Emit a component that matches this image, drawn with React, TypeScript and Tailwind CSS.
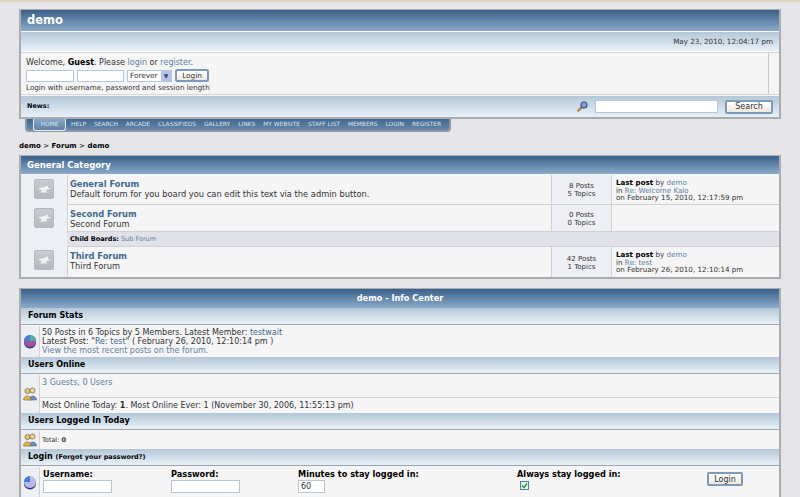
import React from "react";

const font = "font-['DejaVu_Sans',sans-serif]";
const blueBar = "bg-gradient-to-b from-[#3a618a] to-[#8cabc9]";
const paleBar = "bg-gradient-to-b from-[#b4c7d8] to-[#e9f1f7]";
const link = "text-[#5d7fa3]";

const BoardIcon = () => (
  <div className="w-[20px] h-[20px] rounded-[2px] border border-[#b4b8bd] bg-gradient-to-b from-[#c8cdd2] to-[#b2b8be] flex items-center justify-center">
    <svg width="14" height="10" viewBox="0 0 14 10">
      <path d="M1 4 L6 3.5 L11 1.5 L11 4 L13 4 L13 5 L9 6 L10 8.5 L3 8.5 L5 6 Q2 5.5 1 4 Z" fill="#f0f2f3" />
    </svg>
  </div>
);

const PieIcon = ({ full = true }: { full?: boolean }) => (
  <svg width="14" height="15" viewBox="0 0 14 15">
    <ellipse cx="7" cy="8.5" rx="6" ry="6" fill="#34347f" />
    <ellipse cx="7" cy="7" rx="6" ry="6" fill={full ? "#a0569f" : "#b9b9ea"} />
    <path d="M7 7 L7 1 A6 6 0 0 0 1 7 Z" fill="#3f7fd8" />
    {full && <path d="M7 7 L7 1 A6 6 0 0 1 13 7 Z" fill="#4db0a0" />}
  </svg>
);

const UsersIcon = () => (
  <svg width="14" height="14" viewBox="0 0 14 14">
    <circle cx="4.5" cy="4" r="2.6" fill="#e8c66a" stroke="#6a6a50" strokeWidth="0.7" />
    <circle cx="9.5" cy="3.5" r="2.6" fill="#e8d48a" stroke="#6a6a50" strokeWidth="0.7" />
    <path d="M6 13 C6 8 13.5 7.5 13.5 13 Z" fill="#6a8fb8" stroke="#54657c" strokeWidth="0.6" />
    <path d="M0.5 13 C0.5 7.5 8 7.5 8 13 Z" fill="#e2b83e" stroke="#6f6a48" strokeWidth="0.6" />
  </svg>
);

const MagnifierIcon = () => (
  <svg width="11" height="11" viewBox="0 0 11 11">
    <line x1="1.2" y1="9.8" x2="5" y2="6" stroke="#b8772a" strokeWidth="2" strokeLinecap="round" />
    <circle cx="7" cy="4" r="3" fill="#7f9fd8" stroke="#3c4c78" strokeWidth="1.1" />
  </svg>
);

const Button = ({ label, className }: { label: string; className: string }) => (
  <button className={`rounded-[2px] border-2 border-[#7d9ab8] bg-gradient-to-b from-white to-[#eee9de] text-[#333] text-center ${className}`}>
    {label}
  </button>
);

const Field = ({ className, value }: { className: string; value?: string }) => (
  <div className={`bg-white border border-[#b6c7d8] text-[#333] px-[2px] ${className}`}>{value}</div>
);

const navItems = ["HELP", "SEARCH", "ARCADE", "CLASSIFIEDS", "GALLERY", "LINKS", "MY WEBSITE", "STAFF LIST", "MEMBERS", "LOGIN", "REGISTER"];

const Header = () => (
  <div className="mx-[19px] mt-[7px] border-2 border-t border-[#a9adb1] bg-[#f5f5f5] w-[762px]">
    <div className={`${blueBar} h-[21px] pl-[6px] text-[11.5px] leading-[21px] font-bold text-white`}>demo</div>
    <div className={`${paleBar} mt-px h-[19px] pr-[6px] text-right text-[7.2px] leading-[19px] text-[#333]`}>
      May 23, 2010, 12:04:17 pm
    </div>
    <div className="flex h-[43px] mt-px border-y border-[#d5d7da]">
      <div className="flex-1 pl-[5px] pt-[3px] text-[#333]">
        <div className="text-[8px] leading-[13px]">
          Welcome, <b className="text-black">Guest</b>. Please <span className={link}>login</span> or <span className={link}>register</span>.
        </div>
        <div className="flex gap-[3px] h-[13px] text-[7.3px] leading-[10px]">
          <Field className="w-[48px] h-[12px] mt-px" />
          <Field className="w-[47px] h-[12px] mt-px" />
          <div className="w-[45px] h-[12px] mt-px flex bg-white border border-[#b6c7d8] pl-[2px] justify-between">
            Forever
            <span className="w-[10px] bg-[#b6c4ea] text-[#33457f] text-[6px] text-center">▼</span>
          </div>
          <Button label="Login" className="w-[34px] leading-[9px]" />
        </div>
        <div className="text-[7.2px] leading-[11px]">Login with username, password and session length</div>
      </div>
      <div className="w-[11px] border-l border-[#c6c8cb]" />
    </div>
    <div className={`${paleBar} mt-px h-[21px] flex items-center`}>
      <b className="pl-[6px] text-[6.5px] text-black">News:</b>
      <div className="flex-1" />
      <MagnifierIcon />
      <Field className="w-[123px] h-[13px] ml-[7px]" />
      <Button label="Search" className="w-[48px] h-[14px] ml-[7px] mr-[6px] text-[8px] leading-[10px]" />
    </div>
  </div>
);

const Nav = () => (
  <div className="ml-[25px] w-[426px] h-[13px] flex bg-gradient-to-b from-[#41688f] to-[#6487aa] rounded-b-[4px] border-2 border-t-0 border-[#8e98a3] text-[5.9px] leading-[11px] text-[#d9e4ee] pl-[6px] whitespace-nowrap">
    <div className="w-[33px] h-[12px] text-center bg-gradient-to-b from-[#8aa8c6] to-[#5d81a6] rounded-b-[3px] border border-t-0 border-[#e8eaec] text-[#d8e3ee]">HOME</div>
    <div className="flex gap-[8px] pl-[5px]">
      {navItems.map((item) => (
        <span key={item}>{item}</span>
      ))}
    </div>
  </div>
);

const Stats = ({ posts, topics }: { posts: string; topics: string }) => (
  <div className="w-[61px] bg-[#edeff4] border-x border-[#cfd1d4] text-center text-[7px] leading-[8px] pt-px text-[#333] flex flex-col justify-center">
    <div>{posts} Posts</div>
    <div>{topics} Topics</div>
  </div>
);

const LastPost = ({ topic, date }: { topic?: string; date?: string }) => (
  <div className="w-[167px] pl-[4px] pt-[4px] text-[7.15px] leading-[7.6px] text-[#333] whitespace-nowrap">
    {topic && (
      <>
        <div><b className="text-black">Last post</b> by <span className={link}>demo</span></div>
        <div>in <span className={link}>{topic}</span></div>
        <div>on {date}</div>
      </>
    )}
  </div>
);

const ForumRow = ({ title, text, className, children }: { title: string; text: string; className: string; children: React.ReactNode }) => (
  <div className={`flex border-b border-[#cfd1d4] ${className}`}>
    <div className="flex-1 pl-[2px] pt-[4px] border-l border-[#cfd1d4]">
      <div className="text-[8.3px] leading-[10px] font-bold text-[#41688f]">{title}</div>
      <div className="text-[8.3px] leading-[11px] text-[#333]">{text}</div>
    </div>
    {children}
  </div>
);

const Category = () => (
  <div className="ml-[19px] mt-[3px] w-[762px] border-2 border-t border-[#a9adb1] bg-[#f5f5f5]">
    <div className={`${blueBar} h-[18px] pl-[6px] text-[8.5px] leading-[18px] font-bold text-white`}>General Category</div>
    <div className="flex border-t border-[#f5f5f5]">
      <div className="w-[46px] bg-[#edeff4] flex flex-col items-center">
        <div className="h-[30px] pt-[4px]"><BoardIcon /></div>
        <div className="h-[42px] pt-[3px]"><BoardIcon /></div>
        <div className="pt-[3px]"><BoardIcon /></div>
      </div>
      <div className="flex-1">
        <ForumRow title="General Forum" text="Default forum for you board you can edit this text via the admin button." className="h-[30px]">
          <Stats posts="8" topics="5" />
          <LastPost topic="Re: Welcome Kalo" date="February 15, 2010, 12:17:59 pm" />
        </ForumRow>
        <ForumRow title="Second Forum" text="Second Forum" className="h-[27px]">
          <Stats posts="0" topics="0" />
          <LastPost />
        </ForumRow>
        <div className="h-[15px] pl-[3px] bg-[#e0e1e9] border-b border-[#cfd1d4] text-[6.5px] leading-[15px] text-[#666]">
          <b className="text-black">Child Boards:</b> <span className={link}>Sub Forum</span>
        </div>
        <ForumRow title="Third Forum" text="Third Forum" className="h-[30px] border-b-0">
          <Stats posts="42" topics="1" />
          <LastPost topic="Re: test" date="February 26, 2010, 12:10:14 pm" />
        </ForumRow>
      </div>
    </div>
  </div>
);

const SectionTitle = ({ children }: { children: React.ReactNode }) => (
  <div className={`${paleBar} h-[17px] pl-[7px] border-b border-[#9aa5b0] text-[8px] leading-[16px] font-bold text-black`}>{children}</div>
);

const InfoRow = ({ icon, className, children }: { icon: React.ReactNode; className: string; children: React.ReactNode }) => (
  <div className={`flex border-t border-[#f5f5f5] ${className}`}>
    <div className="w-[19px] bg-[#edeff4] border-r border-[#cfd1d4] flex items-center justify-center">{icon}</div>
    <div className="flex-1 text-[#333]">{children}</div>
  </div>
);

const InfoCenter = () => (
  <div className="ml-[19px] mt-[9px] w-[762px] border-2 border-t border-[#a9adb1] bg-[#f5f5f5]">
    <div className={`${blueBar} h-[19px] text-center text-[8.2px] leading-[19px] font-bold text-white`}>demo - Info Center</div>
    <SectionTitle>Forum Stats</SectionTitle>
    <InfoRow icon={<PieIcon />} className="h-[32px]">
      <div className="pl-[2px] pt-[3px] text-[8px] leading-[8.8px]">
        <div>50 Posts in 6 Topics by 5 Members. Latest Member: <span className="text-[#41688f]">testwait</span></div>
        <div>Latest Post: "<b className="font-normal text-[#41688f]">Re: test</b>" ( February 26, 2010, 12:10:14 pm )</div>
        <div className={link}>View the most recent posts on the forum.</div>
      </div>
    </InfoRow>
    <SectionTitle>Users Online</SectionTitle>
    <InfoRow icon={<UsersIcon />} className="h-[39px]">
      <div className={`h-[23px] border-b border-[#cfd1d4] pl-[2px] pt-[3px] text-[8px] leading-[10px] ${link}`}>3 Guests, 0 Users</div>
      <div className="pl-[2px] text-[8px] leading-[15px]">Most Online Today: <b>1</b>. Most Online Ever: 1 (November 30, 2006, 11:55:13 pm)</div>
    </InfoRow>
    <SectionTitle>Users Logged In Today</SectionTitle>
    <InfoRow icon={<UsersIcon />} className="h-[19px]">
      <div className="pl-[2px] text-[6.5px] leading-[18px]">Total: <b>0</b></div>
    </InfoRow>
    <SectionTitle>
      Login <span className="text-[6.5px]">(Forgot your password?)</span>
    </SectionTitle>
    <InfoRow icon={<PieIcon full={false} />} className="h-[31px]">
      <div className="flex pl-[3px] pt-[2px] text-[8.2px] leading-[10px] font-bold text-black">
        <div className="w-[128px]">
          Username:
          <Field className="w-[69px] h-[13px] mt-[1px]" />
        </div>
        <div className="w-[127px]">
          Password:
          <Field className="w-[69px] h-[13px] mt-[1px]" />
        </div>
        <div className="w-[219px]">
          Minutes to stay logged in:
          <Field className="w-[27px] h-[13px] mt-[1px] font-normal text-[8px] leading-[11px]" value="60" />
        </div>
        <div className="w-[190px]">
          Always stay logged in:
          <div className="ml-[3px] mt-[2px] w-[9px] h-[9px] border border-[#5a7fa0] bg-[#e3eef2] flex items-center justify-center">
            <svg width="7" height="7" viewBox="0 0 7 7">
              <path d="M1 3.5 L3 5.5 L6 1.5" fill="none" stroke="#1f9a2a" strokeWidth="1.4" />
            </svg>
          </div>
        </div>
        <Button label="Login" className="w-[36px] h-[14px] mt-[3px] font-normal text-[8px] leading-[9px]" />
      </div>
    </InfoRow>
  </div>
);

export default function App() {
  return (
    <div className={`${font} w-[800px] h-[497px] overflow-hidden bg-[#e5e5e8] border-t-2 border-[#d9d4c3]`}>
      <Header />
      <Nav />
      <div className="ml-[19px] mt-[9px] h-[11px] text-[7px] leading-[11px] font-bold text-black">
        demo <span className="font-normal">&gt;</span> Forum <span className="font-normal">&gt;</span> demo
      </div>
      <Category />
      <InfoCenter />
    </div>
  );
}
